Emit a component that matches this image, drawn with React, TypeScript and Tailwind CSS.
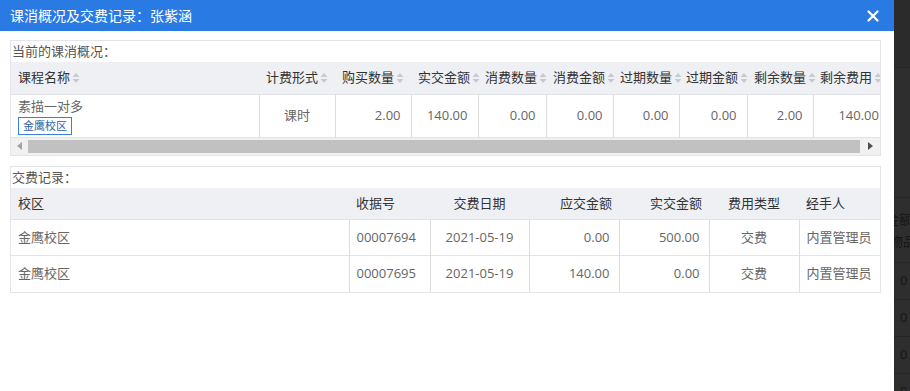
import { X } from "lucide-react";

const FONT = { fontFamily: '"Open Sans", "Noto Sans CJK SC", sans-serif' };

function SortIcon() {
  return (
    <svg width="8" height="12" viewBox="0 0 8 12" className="ml-[2px] inline-block shrink-0">
      <path d="M4 1 L7.5 5 L0.5 5 Z" fill="#c6c9cf" />
      <path d="M4 11 L7.5 7 L0.5 7 Z" fill="#c6c9cf" />
    </svg>
  );
}

const summaryCols = [
  { label: "课程名称", w: "w-[248px]" },
  { label: "计费形式", w: "w-[76px]" },
  { label: "购买数量", w: "w-[76px]" },
  { label: "实交金额", w: "w-[67px]" },
  { label: "消费数量", w: "w-[68px]" },
  { label: "消费金额", w: "w-[67px]" },
  { label: "过期数量", w: "w-[66px]" },
  { label: "过期金额", w: "w-[68px]" },
  { label: "剩余数量", w: "w-[66px]" },
  { label: "剩余费用", w: "w-[76px]" },
];

const summaryNums = ["2.00", "140.00", "0.00", "0.00", "0.00", "0.00", "2.00", "140.00"];

const payRows = [
  { no: "00007694", date: "2021-05-19", due: "0.00", paid: "500.00" },
  { no: "00007695", date: "2021-05-19", due: "140.00", paid: "0.00" },
];

function SummaryPanel() {
  return (
    <div className="border border-[#e4e5ea] bg-white">
      <div className="h-[21px] pl-[1px] text-[13px] leading-[21px] text-[#555]">当前的课消概况：</div>
      <div className="overflow-hidden">
        <table className="w-[878px] table-fixed border-collapse">
          <colgroup>
            {summaryCols.map((c) => (
              <col key={c.label} className={c.w} />
            ))}
          </colgroup>
          <thead>
            <tr className="h-[32px] bg-[#eff0f4]">
              {summaryCols.map((c) => (
                <th key={c.label} className="px-[7px] text-left text-[13px] font-normal text-[#333]">
                  <span className="flex items-center whitespace-nowrap">
                    {c.label}
                    <SortIcon />
                  </span>
                </th>
              ))}
            </tr>
          </thead>
          <tbody>
            <tr className="h-[43px] border-y border-[#e2e3e8] text-[13px] text-[#666]">
              <td className="px-[7px] align-top">
                <div className="pt-[1px] leading-[20px]">素描一对多</div>
                <span className="mt-[1px] inline-block h-[18px] border border-[#3a7fd8] px-[4px] text-[11px] leading-[16px] text-[#2d5fa8]">
                  金鹰校区
                </span>
              </td>
              <td className="border-l border-[#dedede] text-center">课时</td>
              {summaryNums.map((n, i) => (
                <td key={i} className="border-l border-[#dedede] px-[10px] text-right">
                  {n}
                </td>
              ))}
            </tr>
          </tbody>
        </table>
      </div>
      {/* scrollbar drawn by hand so it looks like the windows one */}
      <div className="flex h-[17px] items-center bg-[#f1f1f1]">
        <div className="flex w-[17px] justify-center">
          <svg width="5" height="8" viewBox="0 0 5 8">
            <path d="M5 0 L0 4 L5 8 Z" fill="#a3a3a3" />
          </svg>
        </div>
        <div className="h-[13px] flex-1 bg-[#c1c1c1]" />
        <div className="flex w-[20px] justify-center">
          <svg width="5" height="8" viewBox="0 0 5 8">
            <path d="M0 0 L5 4 L0 8 Z" fill="#505050" />
          </svg>
        </div>
      </div>
    </div>
  );
}

function PaymentPanel() {
  return (
    <div className="border border-[#e4e5ea] bg-white">
      <div className="h-[21px] pl-[1px] text-[13px] leading-[21px] text-[#555]">交费记录：</div>
      <table className="w-full table-fixed border-collapse text-[13px]">
        <colgroup>
          <col className="w-[338px]" />
          <col className="w-[81px]" />
          <col className="w-[99px]" />
          <col className="w-[90px]" />
          <col className="w-[90px]" />
          <col className="w-[90px]" />
          <col />
        </colgroup>
        <thead>
          <tr className="h-[32px] bg-[#eff0f4] text-[#333]">
            <th className="px-[7px] text-left font-normal">校区</th>
            <th className="px-[7px] text-left font-normal">收据号</th>
            <th className="px-[7px] text-center font-normal">交费日期</th>
            <th className="px-[7px] text-right font-normal">应交金额</th>
            <th className="px-[7px] text-right font-normal">实交金额</th>
            <th className="px-[7px] text-center font-normal">费用类型</th>
            <th className="px-[7px] text-left font-normal">经手人</th>
          </tr>
        </thead>
        <tbody className="text-[#666]">
          {payRows.map((r) => (
            <tr key={r.no} className="h-[36px] border-t border-[#e2e3e8]">
              <td className="px-[7px]">金鹰校区</td>
              <td className="border-l border-[#dedede] px-[7px]">{r.no}</td>
              <td className="border-l border-[#dedede] px-[7px] text-center">{r.date}</td>
              <td className="border-l border-[#dedede] px-[9px] text-right">{r.due}</td>
              <td className="border-l border-[#dedede] px-[9px] text-right">{r.paid}</td>
              <td className="border-l border-[#dedede] px-[7px] text-center">交费</td>
              <td className="border-l border-[#dedede] px-[7px]">内置管理员</td>
            </tr>
          ))}
        </tbody>
      </table>
    </div>
  );
}

// page behind the modal, only a sliver shows on the right
function Backdrop() {
  return (
    <div className="h-[391px] flex-1 overflow-hidden whitespace-nowrap bg-[#2e2e2e] text-[13px] text-[#161616]">
      <div className="h-[68px] border-b border-[#262626] bg-[#2b2b2b]" />
      <div className="h-[130px] border-b border-[#262626]" />
      <div className="h-[65px] border-b border-[#262626] pt-[10px] leading-[22px]">
        <div className="-ml-[8px]">金额</div>
        <div className="-ml-[4px]">物品</div>
      </div>
      {[0, 1, 2].map((i) => (
        <div key={i} className="h-[37px] border-b border-[#262626] pl-[6px] pt-[8px]">
          0
        </div>
      ))}
      <div className="pl-[6px] pt-[8px]">0</div>
    </div>
  );
}

export default function App() {
  return (
    <div className="flex h-[391px] w-[910px] overflow-hidden" style={FONT}>
      <div className="flex w-[894px] shrink-0 flex-col bg-white">
        <div className="flex h-[31px] shrink-0 items-center justify-between bg-[#2a7ae4] pl-[10px] pr-[12px]">
          <span className="text-[14px] text-white">课消概况及交费记录：张紫涵</span>
          <X size={18} strokeWidth={3} className="text-white" />
        </div>
        <div className="flex w-[881px] flex-col gap-[10px] pl-[10px] pt-[9px]">
          <SummaryPanel />
          <PaymentPanel />
        </div>
      </div>
      <Backdrop />
    </div>
  );
}
